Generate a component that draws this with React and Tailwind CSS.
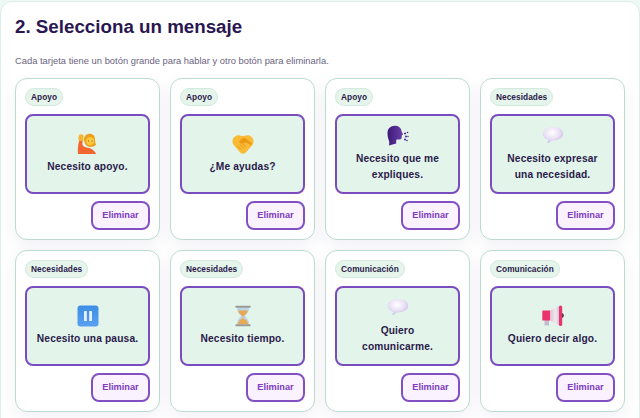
const PersonIcon = () => (
  <svg width="22" height="22" viewBox="0 0 22 22">
    <path d="M1 21c-.3-3-.3-6 .2-9 .3-2 .8-3.800 1.600-5.500l3 1c-.5 1.800-.6 3.200-.3 4.500.8 1.500 2.500 2.300 5 2.700 3.500.5 7 2.200 8.500 6.300z" fill="#f4662f" />
    <path d="M2 8C1 6.500 1.400 3 2.500 1.500c.5-.6 1.200-.3 1.300.3.300-.8 1.300-.8 1.500 0 .7-.2 1.300.3 1.200 1L6.300 8z" fill="#f7b32b" />
    <path d="M7 6.500C7 3 9.500.8 12.700.8 16 .8 18 3.200 18 6.200c0 2.300.3 3.800 1 5.300-.8 1.500-3 2.500-5.500 2.500C10 14 7 10.500 7 6.500z" fill="#eca01c" />
    <path d="M9 7.500c0-2 1.500-3.300 4-3.300s4 1.500 4 3.800c0 2.400-1.700 4.300-3.800 4.300C10.800 12.300 9 10 9 7.500z" fill="#ffc83d" />
    <circle cx="11.500" cy="8" r=".6" fill="#6d4a2a" />
    <circle cx="15" cy="8" r=".6" fill="#6d4a2a" />
  </svg>
);

const HandshakeIcon = () => (
  <svg width="22" height="22" viewBox="0 0 22 22">
    <path d="M.5 8C.6 4.500 3.500 2 7 2.200c1.500.1 2.800.6 4 1 1.200-.4 2.500-.9 4-1 3.500-.2 6.400 2.300 6.500 5.800.1 2-.7 3.600-2 5L13.500 19.700c-1.400 1.400-3.600 1.400-5 0L2.500 13C1.200 11.600.4 10 .5 8z" fill="#f9bb35" />
    <path d="M7 8.500l3.500-3c1-.8 2.500-.8 3.500 0l6 5-1.200 1.700-4.800-3-2.500 1.300C10 11.300 8 10.500 7 8.500z" fill="#ea9a14" />
    <path d="M5.500 13l3.500 3.500M8 11.500l3.700 3.700M11 11l3 3" stroke="#e08c10" strokeWidth=".8" fill="none" />
  </svg>
);

const SpeakingIcon = () => (
  <svg width="22" height="22" viewBox="0 0 22 22">
    <defs>
      <linearGradient id="head" x1="0" y1="0" x2="1" y2="0">
        <stop offset="0" stopColor="#3e1a78" />
        <stop offset="1" stopColor="#6a3ea8" />
      </linearGradient>
    </defs>
    <path d="M.5 8C.5 3.700 3.500.7 8 .7c3.700 0 6 2 6.500 5 .1 1 .4 1.500 1.300 3 .4.800 0 1.200-1 1.400.3.700.3 1.200-.2 1.500.3.800.2 1.600-.3 2.200-.6.900-2 .8-4 .6-.7 0-1.100.5-1.100 1.300v2.900L2 20.500c.5-2 .4-3.700-.3-5.500C1 13 .5 10.800.5 8z" fill="url(#head)" />
    <circle cx="18" cy="8.500" r="1" fill="#4c2590" />
    <circle cx="20.500" cy="7.500" r=".8" fill="#4c2590" />
    <circle cx="19" cy="11.500" r="1" fill="#4c2590" />
    <circle cx="21" cy="11.500" r=".7" fill="#4c2590" />
    <circle cx="18" cy="14.500" r="1" fill="#4c2590" />
    <circle cx="20" cy="15.500" r=".8" fill="#4c2590" />
  </svg>
);

const BubbleIcon = ({ id }) => (
  <svg width="22" height="22" viewBox="0 0 22 22">
    <defs>
      <radialGradient id={id} cx=".45" cy=".35" r=".72">
        <stop offset="0" stopColor="#ffffff" />
        <stop offset=".55" stopColor="#e8dff5" />
        <stop offset="1" stopColor="#bfaee2" />
      </radialGradient>
    </defs>
    <path d="M11 2C5 2 .8 5 .8 8.800c0 3 2.400 5.200 5.700 6.200-.3 1.200-.6 2.200-1.200 3 2-.3 3.200-1.300 4.300-2.500h1.400c6 0 10.200-2.800 10.200-6.700S17 2 11 2z" fill={`url(#${id})`} />
  </svg>
);

const PauseIcon = () => (
  <svg width="22" height="22" viewBox="0 0 22 22">
    <defs>
      <linearGradient id="pauseBg" x1="0" y1="0" x2="0" y2="1">
        <stop offset="0" stopColor="#3d8ee6" />
        <stop offset="1" stopColor="#5aa0f2" />
      </linearGradient>
    </defs>
    <rect x=".5" y=".5" width="21" height="21" rx="3" fill="url(#pauseBg)" />
    <rect x="7" y="6" width="2.800" height="10" rx=".6" fill="#e8f2fd" />
    <rect x="12.200" y="6" width="2.800" height="10" rx=".6" fill="#e8f2fd" />
  </svg>
);

const HourglassIcon = () => (
  <svg width="22" height="22" viewBox="0 0 22 22">
    <path d="M5 2.500h12c0 3.500-1 5.800-4.300 8.500 3.300 2.700 4.300 5 4.300 8.500H5c0-3.500 1-5.800 4.300-8.500C6 8.300 5 6 5 2.500z" fill="#bcd5e6" />
    <path d="M6.200 5.500h9.600c-.3 2-1.500 3.500-4.100 5.500h-1.400C7.700 9 6.500 7.500 6.200 5.500z" fill="#eaa850" />
    <path d="M6 19c.2-2.700 2.200-4.600 5-5.500 2.800.9 4.800 2.800 5 5.500z" fill="#eaa850" />
    <rect x="10.700" y="10.500" width=".7" height="4" fill="#eaa850" />
    <rect x="3.500" y=".8" width="15" height="2" rx=".5" fill="#9a9a94" />
    <rect x="3.500" y="19.200" width="15" height="2" rx=".5" fill="#9a9a94" />
  </svg>
);

const MegaphoneIcon = () => (
  <svg width="22" height="22" viewBox="0 0 22 22">
    <defs>
      <linearGradient id="horn" x1="0" y1="0" x2="1" y2="0">
        <stop offset="0" stopColor="#e8bcd0" />
        <stop offset=".55" stopColor="#efe8f0" />
        <stop offset="1" stopColor="#c9bccf" />
      </linearGradient>
    </defs>
    <rect x="2.500" y="14" width="4.500" height="6.500" fill="#c4bdd0" />
    <rect x=".3" y="5.500" width="8" height="10" rx=".5" fill="#e9356b" />
    <path d="M8 5.500L18 .8v20L8 15.500z" fill="url(#horn)" />
    <rect x="17" y=".5" width="3.200" height="20.500" rx="1.600" fill="#e9356b" />
    <path d="M20 8.300c1.300.3 1.900 1.100 1.900 2.200s-.6 1.900-1.900 2.200z" fill="#5b3a4c" />
  </svg>
);

const messages = [
  { tag: "Apoyo", text: "Necesito apoyo.", icon: <PersonIcon /> },
  { tag: "Apoyo", text: "¿Me ayudas?", icon: <HandshakeIcon /> },
  { tag: "Apoyo", text: "Necesito que me expliques.", icon: <SpeakingIcon /> },
  { tag: "Necesidades", text: "Necesito expresar una necesidad.", icon: <BubbleIcon id="bubbleA" /> },
  { tag: "Necesidades", text: "Necesito una pausa.", icon: <PauseIcon /> },
  { tag: "Necesidades", text: "Necesito tiempo.", icon: <HourglassIcon /> },
  { tag: "Comunicación", text: "Quiero comunicarme.", icon: <BubbleIcon id="bubbleB" /> },
  { tag: "Comunicación", text: "Quiero decir algo.", icon: <MegaphoneIcon /> },
];

const MessageCard = ({ tag, text, icon }) => (
  <div className="h-[162px] flex flex-col rounded-[12px] border border-[#bcdccf] bg-white p-[9px] shadow-[0_6px_16px_rgba(70,40,120,0.07)]">
    <span className="self-start h-[18px] flex items-center rounded-full border border-[#d3e9df] bg-[#e6f5ec] px-[5px] text-[8.3px] font-bold tracking-[0.05px] text-[#2a1a4a]">
      {tag}
    </span>
    <button className="mt-[8px] h-[80px] flex flex-col items-center justify-center rounded-[8px] border-2 border-[#7a4cc0] bg-[#e3f4ea] px-[9px] text-[10.2px] leading-[16.5px] font-bold tracking-[0.15px] text-[#2a1a4a]">
      {icon}
      <span className="mt-[4px] text-center">{text}</span>
    </button>
    <button className="mt-[7px] self-end w-[59px] h-[29px] rounded-[8px] border-2 border-[#8350c4] bg-[#faf3ff] text-[9.2px] font-bold text-[#7e3bc0]">
      Eliminar
    </button>
  </div>
);

export default function App() {
  return (
    <div className="h-[418px] overflow-hidden bg-[#eef8f4] pt-px font-['Liberation_Sans',Arial,sans-serif]">
      <div className="h-[460px] rounded-t-[12px] border border-[#dcefe8] bg-white px-[14px] pt-[11px]">
        <h2 className="text-[18.75px] leading-[28px] font-bold text-[#2a1650]">2. Selecciona un mensaje</h2>
        <p className="mt-[13px] text-[9.4px] leading-[14px] text-[#6b6480]">
          Cada tarjeta tiene un botón grande para hablar y otro botón para eliminarla.
        </p>
        <div className="mt-[10px] grid grid-cols-4 gap-[10px]">
          {messages.map((m, i) => (
            <MessageCard key={i} {...m} />
          ))}
        </div>
      </div>
    </div>
  );
}
